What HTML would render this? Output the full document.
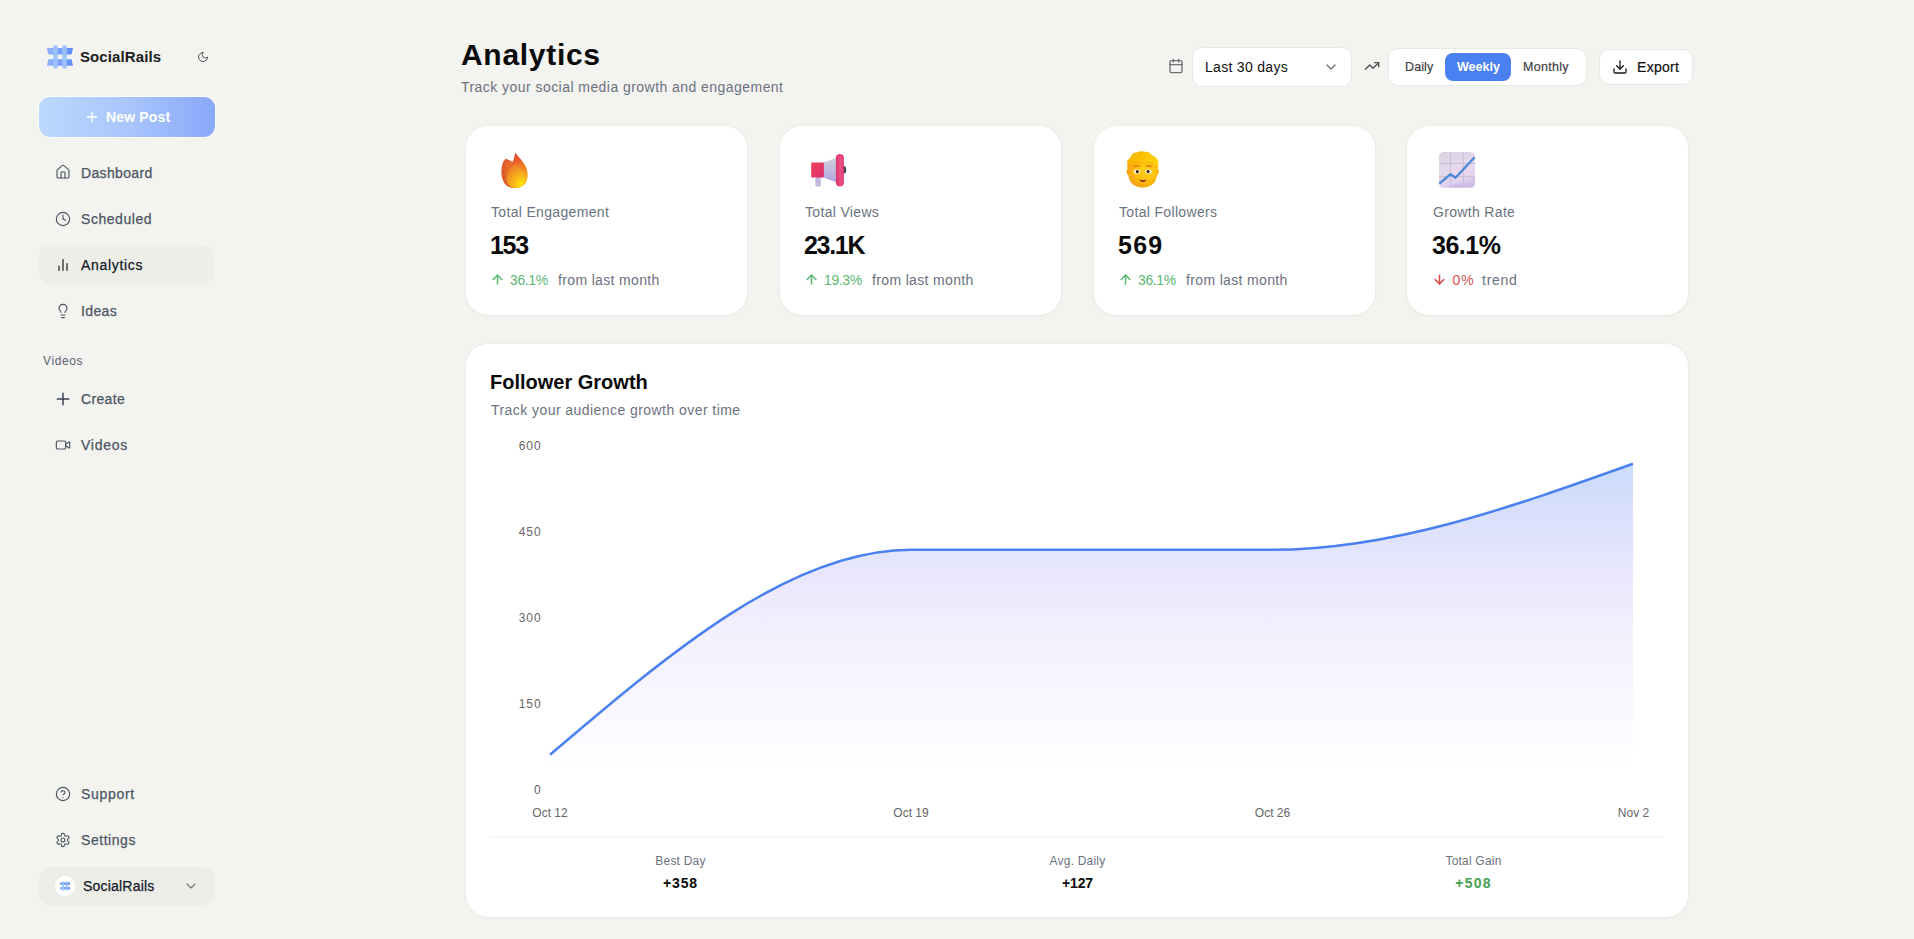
<!DOCTYPE html>
<html>
<head>
<meta charset="utf-8">
<style>
*{box-sizing:border-box;margin:0;padding:0}
html,body{width:1914px;height:939px;overflow:hidden}
body{background:#f3f3ef;font-family:"Liberation Sans",sans-serif;position:relative;color:#111827}
.a{position:absolute}
.t{position:absolute;white-space:nowrap;line-height:1}
.ic{position:absolute;fill:none;stroke-linecap:round;stroke-linejoin:round}
.nav{color:#4b5563;font-size:14px;letter-spacing:0.35px;-webkit-text-stroke:0.25px currentColor}
.card{position:absolute;background:#fff;border-radius:22px;box-shadow:0 0 2px 1px rgba(0,0,0,0.028),0 1px 3px rgba(0,0,0,0.035)}
</style>
</head>
<body>
<!-- SIDEBAR -->
<svg class="a" style="left:45px;top:43px" width="30" height="28" viewBox="0 0 30 28">
  <defs>
    <linearGradient id="lg1" x1="0" y1="0" x2="1" y2="0"><stop offset="0" stop-color="#93b3f8"/><stop offset="1" stop-color="#5b8cf8"/></linearGradient>
  </defs>
  <path d="M1.9 4.9H28L26.6 11.6H3.3Z" fill="url(#lg1)"/>
  <path d="M3.3 16.2H26.6L28 22.7H1.9Z" fill="url(#lg1)"/>
  <rect x="8.2" y="2" width="4.6" height="23.8" rx="2.3" fill="#9cc2fb" opacity="0.95"/>
  <rect x="17.2" y="2" width="4.6" height="23.8" rx="2.3" fill="#9cc2fb" opacity="0.95"/>
</svg>
<div class="t" style="left:80px;top:49px;font-size:15px;font-weight:700;color:#1c1c1c;letter-spacing:0.1px">SocialRails</div>
<svg class="ic" style="left:197px;top:51px" width="12" height="12" viewBox="0 0 24 24" stroke="#52525b" stroke-width="2"><path d="M12 3a6 6 0 0 0 9 9 9 9 0 1 1-9-9Z"/></svg>

<div class="a" style="left:39px;top:97px;width:176px;height:40px;border-radius:11px;background:linear-gradient(90deg,#bcd8fd 0%,#a9c6fc 50%,#88a8fa 100%);box-shadow:0 0 0 1px rgba(255,255,255,0.7)"></div>
<svg class="ic" style="left:84px;top:109px" width="16" height="16" viewBox="0 0 24 24" stroke="#fff" stroke-width="2"><path d="M5 12h14M12 5v14"/></svg>
<div class="t" style="left:106px;top:110px;font-size:14px;font-weight:700;color:#fff;letter-spacing:0.15px">New Post</div>

<!-- nav items -->
<svg class="ic" style="left:55px;top:164px" width="16" height="16" viewBox="0 0 24 24" stroke="#4b5563" stroke-width="1.7"><path d="M15 21v-8a1 1 0 0 0-1-1h-4a1 1 0 0 0-1 1v8"/><path d="M3 10a2 2 0 0 1 .709-1.528l7-5.999a2 2 0 0 1 2.582 0l7 5.999A2 2 0 0 1 21 10v9a2 2 0 0 1-2 2H5a2 2 0 0 1-2-2z"/></svg>
<div class="t nav" style="left:81px;top:166px">Dashboard</div>

<svg class="ic" style="left:55px;top:211px" width="16" height="16" viewBox="0 0 24 24" stroke="#4b5563" stroke-width="1.7"><circle cx="12" cy="12" r="10"/><path d="M12 6v6l4 2"/></svg>
<div class="t nav" style="left:81px;top:212px;letter-spacing:0.55px">Scheduled</div>

<div class="a" style="left:39px;top:245px;width:175px;height:39px;border-radius:11px;background:#eeeee9"></div>
<svg class="ic" style="left:55px;top:257px" width="16" height="16" viewBox="0 0 24 24" stroke="#3f3f46" stroke-width="2.2"><path d="M6 20v-6M12 20V4M18 20V10"/></svg>
<div class="t nav" style="left:81px;top:258px;color:#111827;letter-spacing:0.68px">Analytics</div>

<svg class="ic" style="left:55px;top:303px" width="16" height="16" viewBox="0 0 24 24" stroke="#4b5563" stroke-width="1.7"><path d="M15 14c.2-1 .7-1.7 1.5-2.5 1-.9 1.5-2.2 1.5-3.5A6 6 0 0 0 6 8c0 1 .2 2.2 1.5 3.5.7.7 1.3 1.5 1.5 2.5"/><path d="M9 18h6"/><path d="M10 22h4"/></svg>
<div class="t nav" style="left:81px;top:304px">Ideas</div>

<div class="t" style="left:43px;top:355px;font-size:12px;color:#5b6270;letter-spacing:0.6px">Videos</div>

<svg class="ic" style="left:55px;top:391px" width="16" height="16" viewBox="0 0 24 24" stroke="#374151" stroke-width="2.2"><path d="M3.5 12h17M12 3.5v17"/></svg>
<div class="t nav" style="left:81px;top:392px">Create</div>

<svg class="ic" style="left:55px;top:437px" width="16" height="16" viewBox="0 0 24 24" stroke="#4b5563" stroke-width="1.7"><path d="m16 13 5.223 3.482a.5.5 0 0 0 .777-.416V7.87a.5.5 0 0 0-.752-.432L16 10.5"/><rect x="2" y="6" width="14" height="12" rx="2"/></svg>
<div class="t nav" style="left:81px;top:438px;letter-spacing:0.75px">Videos</div>

<svg class="ic" style="left:55px;top:786px" width="16" height="16" viewBox="0 0 24 24" stroke="#4b5563" stroke-width="1.7"><circle cx="12" cy="12" r="10"/><path d="M9.09 9a3 3 0 0 1 5.83 1c0 2-3 3-3 3"/><path d="M12 17h.01"/></svg>
<div class="t nav" style="left:81px;top:787px;letter-spacing:0.68px">Support</div>

<svg class="ic" style="left:55px;top:832px" width="16" height="16" viewBox="0 0 24 24" stroke="#4b5563" stroke-width="1.7"><path d="M12.22 2h-.44a2 2 0 0 0-2 2v.18a2 2 0 0 1-1 1.73l-.43.25a2 2 0 0 1-2 0l-.15-.08a2 2 0 0 0-2.73.73l-.22.38a2 2 0 0 0 .73 2.73l.15.1a2 2 0 0 1 1 1.72v.51a2 2 0 0 1-1 1.74l-.15.09a2 2 0 0 0-.73 2.73l.22.38a2 2 0 0 0 2.73.73l.15-.08a2 2 0 0 1 2 0l.43.25a2 2 0 0 1 1 1.73V20a2 2 0 0 0 2 2h.44a2 2 0 0 0 2-2v-.18a2 2 0 0 1 1-1.73l.43-.25a2 2 0 0 1 2 0l.15.08a2 2 0 0 0 2.73-.73l.22-.39a2 2 0 0 0-.73-2.73l-.15-.08a2 2 0 0 1-1-1.74v-.5a2 2 0 0 1 1-1.74l.15-.09a2 2 0 0 0 .73-2.73l-.22-.38a2 2 0 0 0-2.73-.73l-.15.08a2 2 0 0 1-2 0l-.43-.25a2 2 0 0 1-1-1.73V4a2 2 0 0 0-2-2z"/><circle cx="12" cy="12" r="3"/></svg>
<div class="t nav" style="left:81px;top:833px;letter-spacing:0.55px">Settings</div>

<div class="a" style="left:39px;top:867px;width:176px;height:38px;border-radius:12px;background:#edede8"></div>
<div class="a" style="left:55px;top:876px;width:20px;height:20px;border-radius:10px;background:#fff"></div>
<svg class="a" style="left:59px;top:880px" width="12" height="12" viewBox="0 0 30 28">
  <path d="M1.9 4.9H28L26.6 11.6H3.3Z" fill="url(#lg1)"/>
  <path d="M3.3 16.2H26.6L28 22.7H1.9Z" fill="url(#lg1)"/>
  <rect x="8.2" y="2" width="4.6" height="23.8" rx="2.3" fill="#9cc2fb"/>
  <rect x="17.2" y="2" width="4.6" height="23.8" rx="2.3" fill="#9cc2fb"/>
</svg>
<div class="t" style="left:83px;top:879px;font-size:14px;color:#111827;letter-spacing:0.2px;-webkit-text-stroke:0.25px currentColor">SocialRails</div>
<svg class="ic" style="left:183px;top:878px" width="16" height="16" viewBox="0 0 24 24" stroke="#71717a" stroke-width="1.7"><path d="m6 9 6 6 6-6"/></svg>

<!-- HEADER -->
<div class="t" style="left:461px;top:40px;font-size:30px;font-weight:700;color:#0a0a0a;letter-spacing:0.7px">Analytics</div>
<div class="t" style="left:461px;top:80px;font-size:14px;color:#6b7280;letter-spacing:0.45px">Track your social media growth and engagement</div>


<!-- header controls -->
<svg class="ic" style="left:1168px;top:58px" width="16" height="16" viewBox="0 0 24 24" stroke="#71717a" stroke-width="2"><path d="M8 2v4M16 2v4"/><rect x="3" y="4" width="18" height="18" rx="2"/><path d="M3 10h18"/></svg>
<div class="a" style="left:1192px;top:47px;width:160px;height:40px;border-radius:10px;background:#fff;border:1px solid #e8e8e6"></div>
<div class="t" style="left:1205px;top:60px;font-size:14px;color:#111;letter-spacing:0.3px">Last 30 days</div>
<svg class="ic" style="left:1323px;top:59px" width="16" height="16" viewBox="0 0 24 24" stroke="#71717a" stroke-width="2"><path d="m6 9 6 6 6-6"/></svg>
<svg class="ic" style="left:1364px;top:58px" width="16" height="16" viewBox="0 0 24 24" stroke="#52525b" stroke-width="2"><path d="M22 7 13.5 15.5 8.5 10.5 2 17"/><path d="M16 7h6v6"/></svg>
<div class="a" style="left:1388px;top:48px;width:199px;height:38px;border-radius:10px;background:#fff;border:1px solid #e8e8e6"></div>
<div class="a" style="left:1445px;top:53px;width:66px;height:28px;border-radius:8px;background:#4a80f0"></div>
<div class="t" style="left:1405px;top:61px;font-size:12.5px;color:#3f3f46;letter-spacing:0.1px;-webkit-text-stroke:0.2px currentColor">Daily</div>
<div class="t" style="left:1457px;top:61px;font-size:12.5px;font-weight:700;color:#fff;letter-spacing:0px">Weekly</div>
<div class="t" style="left:1523px;top:61px;font-size:12.5px;color:#3f3f46;letter-spacing:0.3px;-webkit-text-stroke:0.2px currentColor">Monthly</div>
<div class="a" style="left:1599px;top:49px;width:94px;height:36px;border-radius:10px;background:#fff;border:1px solid #e8e8e6"></div>
<svg class="ic" style="left:1612px;top:59px" width="16" height="16" viewBox="0 0 24 24" stroke="#18181b" stroke-width="2"><path d="M12 15V3"/><path d="M21 15v4a2 2 0 0 1-2 2H5a2 2 0 0 1-2-2v-4"/><path d="m7 10 5 5 5-5"/></svg>
<div class="t" style="left:1637px;top:60px;font-size:14px;color:#111;letter-spacing:0.3px;-webkit-text-stroke:0.2px currentColor">Export</div>

<!-- stat cards -->
<div class="card" style="left:466px;top:126px;width:281px;height:189px"></div>
<div class="card" style="left:780px;top:126px;width:281px;height:189px"></div>
<div class="card" style="left:1094px;top:126px;width:281px;height:189px"></div>
<div class="card" style="left:1407px;top:126px;width:281px;height:189px"></div>

<!-- fire -->
<svg class="a" style="left:495px;top:147px" width="40" height="45" viewBox="0 0 40 45">
 <defs>
  <linearGradient id="fg1" x1="0.3" y1="0" x2="0.6" y2="1"><stop offset="0" stop-color="#de3a36"/><stop offset="0.4" stop-color="#f07426"/><stop offset="1" stop-color="#f9a51c"/></linearGradient>
  <radialGradient id="fg2" cx="0.7" cy="0.85" r="0.8"><stop offset="0" stop-color="#ffe600"/><stop offset="0.3" stop-color="#fcc418"/><stop offset="0.75" stop-color="#f49a22"/><stop offset="1" stop-color="#ef8426"/></radialGradient>
 </defs>
 <path d="M11.2,11.8 C9.2,12.5 7.5,15.5 6.8,19.5 C6,24 6.3,29.5 8,33.5 C9.7,37.5 12.5,40 16,40.8 L21,40.8 L21,16 C17.5,15 14.5,14 13,12.8 C12.5,12.2 11.8,11.7 11.2,11.8 Z" fill="#dd5a2e"/>
 <path d="M14.3,13.2 C12.5,14 10.8,17 10,20.5 C9.2,24.5 9.3,29.5 10.8,33.5 C12.3,37.5 15,40 18.5,40.8 L21,40.8 L21,17 C18.5,15.8 16.2,14.3 15.3,13.5 C15,13.3 14.6,13.1 14.3,13.2 Z" fill="#e86a2b"/>
 <path d="M20.1,5.7 C23.5,9.5 29,15 31.2,20.5 C32.6,24 33,28.5 32,32.5 C30.6,37.5 26.5,40.8 21,40.8 C17,40.8 14,38 13,34 C12,29 13.5,23 16,18.5 C17.8,15 19.5,11 20.1,5.7 Z" fill="url(#fg1)"/>
 <path d="M20.2,16.7 C16.5,19.5 12.8,24 11.8,29 C10.9,33.5 12.3,38 15.8,40.2 C17.3,40.8 19,40.9 21,40.8 C26.5,40.8 30.8,37.5 32,32.5 C32.6,29.5 32.4,26.5 31.8,24 C29,23.5 26.5,21.5 24.5,20 C23,18.8 21.5,17.6 20.2,16.7 Z" fill="url(#fg2)"/>
</svg>
<div class="t" style="left:491px;top:205px;font-size:14px;color:#6b7280;letter-spacing:0.33px">Total Engagement</div>
<div class="t" style="left:490px;top:233px;font-size:25px;font-weight:700;color:#0a0a0a;letter-spacing:-1.3px">153</div>
<svg class="ic" style="left:490px;top:272px" width="15" height="15" viewBox="0 0 24 24" stroke="#5cb874" stroke-width="2.4"><path d="m5 12 7-7 7 7"/><path d="M12 19V5"/></svg>
<div class="t" style="left:510px;top:272.5px;font-size:14px;color:#5cb874;letter-spacing:-0.4px">36.1%</div>
<div class="t" style="left:558px;top:272.5px;font-size:14px;color:#6b7280;letter-spacing:0.35px">from last month</div>

<!-- megaphone -->
<svg class="a" style="left:806px;top:150px" width="44" height="40" viewBox="806 150 44 40">
 <defs>
  <linearGradient id="mg1" x1="0" y1="0" x2="1" y2="1"><stop offset="0" stop-color="#f0415a"/><stop offset="1" stop-color="#d8306f"/></linearGradient>
  <linearGradient id="mg2" x1="0" y1="0" x2="0" y2="1"><stop offset="0" stop-color="#d2d0dc"/><stop offset="1" stop-color="#b0a4e0"/></linearGradient>
  <linearGradient id="mg3" x1="0" y1="0" x2="1" y2="0"><stop offset="0" stop-color="#d9356d"/><stop offset="0.6" stop-color="#f14d85"/><stop offset="1" stop-color="#d83a72"/></linearGradient>
 </defs>
 <rect x="815.4" y="176" width="5.4" height="10.5" fill="#c4b8e0"/>
 <path d="M823.5 162.6 837 157.8 837 182.5 823.5 177.5Z" fill="url(#mg2)"/>
 <rect x="811.2" y="162.6" width="12.7" height="15" rx="0.8" fill="url(#mg1)"/>
 <ellipse cx="843.8" cy="169.8" rx="2.4" ry="3.9" fill="#4a4458"/>
 <rect x="835.9" y="154" width="8" height="32.5" rx="4" fill="url(#mg3)"/>
</svg>
<div class="t" style="left:805px;top:205px;font-size:14px;color:#6b7280;letter-spacing:0.33px">Total Views</div>
<div class="t" style="left:804px;top:233px;font-size:25px;font-weight:700;color:#0a0a0a;letter-spacing:-1.3px">23.1K</div>
<svg class="ic" style="left:804px;top:272px" width="15" height="15" viewBox="0 0 24 24" stroke="#5cb874" stroke-width="2.4"><path d="m5 12 7-7 7 7"/><path d="M12 19V5"/></svg>
<div class="t" style="left:824px;top:272.5px;font-size:14px;color:#5cb874;letter-spacing:-0.4px">19.3%</div>
<div class="t" style="left:872px;top:272.5px;font-size:14px;color:#6b7280;letter-spacing:0.35px">from last month</div>

<!-- face -->
<svg class="a" style="left:1115px;top:145px" width="60" height="50" viewBox="0 0 60 50">
 <defs>
  <radialGradient id="pg1" cx="0.62" cy="0.42" r="0.72"><stop offset="0" stop-color="#ffd21c"/><stop offset="0.5" stop-color="#fdbd0c"/><stop offset="0.85" stop-color="#f5a312"/><stop offset="1" stop-color="#ee8a22"/></radialGradient>
  <linearGradient id="pg2" x1="0" y1="0.2" x2="1" y2="0.6"><stop offset="0" stop-color="#f4b000"/><stop offset="0.6" stop-color="#fcc800"/><stop offset="1" stop-color="#ffd40c"/></linearGradient>
 </defs>
 <path d="M12.3,24.5 C11.2,25.5 11.4,29.5 13.3,30.2 C13.8,33.5 14.8,36 16.2,37.8 C18.8,40.8 23,42.6 27.7,42.6 C32.4,42.6 36.7,40.8 39.2,37.8 C40.6,36 41.6,33.5 42.1,30.2 C44,29.5 44.3,25.5 43.1,24.5 L43,15 L12.6,15 Z" fill="url(#pg1)"/>
 <path d="M12.6,20.5 C12,17 13,13.5 15.8,12 C16.5,9 19,7.3 21.8,7.6 C24,6.2 27.5,5.8 30,6.8 C32.8,6.5 35.8,8 37,10.5 C40.5,11 42.8,14 43.2,17 C43.5,19 43.3,21 42.9,22.5 C42,20.8 40.8,19.2 39,18.3 C37.5,17.2 35.5,16.6 33.5,16.8 C31,16.2 28,15.8 25,16.3 C22,16.5 19.5,17 17.5,18 C15.5,18.8 13.8,19.8 12.6,20.5 Z" fill="url(#pg2)"/>
 <path d="M19.6,21.6 C21,20.6 22.6,20.5 24.2,21.2" stroke="#e07412" stroke-width="1.3" fill="none" stroke-linecap="round"/>
 <path d="M31.6,21.2 C33.2,20.5 34.8,20.6 36.2,21.6" stroke="#e07412" stroke-width="1.3" fill="none" stroke-linecap="round"/>
 <ellipse cx="21.9" cy="26.6" rx="3.1" ry="2.1" fill="#fff"/>
 <ellipse cx="33.5" cy="26.6" rx="3.1" ry="2.1" fill="#fff"/>
 <circle cx="22.3" cy="26.6" r="1.6" fill="#3b2314"/>
 <circle cx="33.1" cy="26.6" r="1.6" fill="#3b2314"/>
 <path d="M24.4,34.4 C26.6,35.4 29.2,35.4 31.4,34.4 C30.8,36.2 29.4,37 27.9,37 C26.4,37 25,36.2 24.4,34.4 Z" fill="#a0282a"/>
</svg>
<div class="t" style="left:1119px;top:205px;font-size:14px;color:#6b7280;letter-spacing:0.33px">Total Followers</div>
<div class="t" style="left:1118px;top:233px;font-size:25px;font-weight:700;color:#0a0a0a;letter-spacing:1.25px">569</div>
<svg class="ic" style="left:1118px;top:272px" width="15" height="15" viewBox="0 0 24 24" stroke="#5cb874" stroke-width="2.4"><path d="m5 12 7-7 7 7"/><path d="M12 19V5"/></svg>
<div class="t" style="left:1138px;top:272.5px;font-size:14px;color:#5cb874;letter-spacing:-0.4px">36.1%</div>
<div class="t" style="left:1186px;top:272.5px;font-size:14px;color:#6b7280;letter-spacing:0.35px">from last month</div>

<!-- chart emoji -->
<svg class="a" style="left:1436px;top:149px" width="42" height="42" viewBox="1436 149 42 42">
 <defs>
  <linearGradient id="cg1" x1="0" y1="0" x2="0.4" y2="1"><stop offset="0" stop-color="#d9d5e3"/><stop offset="0.55" stop-color="#e4d9ec"/><stop offset="0.88" stop-color="#dcd0ee"/><stop offset="1" stop-color="#c6b6e6"/></linearGradient>
  <radialGradient id="cg2" cx="0.75" cy="0.6" r="0.5"><stop offset="0" stop-color="#f0d8ee" stop-opacity="0.7"/><stop offset="1" stop-color="#f0d8ee" stop-opacity="0"/></radialGradient>
 </defs>
 <rect x="1439" y="152" width="36" height="35.7" rx="4.5" fill="url(#cg1)"/>
 <rect x="1439" y="152" width="36" height="35.7" rx="4.5" fill="url(#cg2)"/>
 <path d="M1450.5 152v35.7M1463.3 152v35.7M1439 163.4h36M1439 176.6h36" stroke="#c3b9cf" stroke-width="0.8"/>
 <path d="M1439.3 183.6 1450.3 174.3 1455.5 177.8 1474.6 157.3" stroke="#4a88d8" stroke-width="2.3" fill="none" stroke-linejoin="round"/>
</svg>
<div class="t" style="left:1433px;top:205px;font-size:14px;color:#6b7280;letter-spacing:0.33px">Growth Rate</div>
<div class="t" style="left:1432px;top:233px;font-size:25px;font-weight:700;color:#0a0a0a;letter-spacing:-0.5px">36.1%</div>
<svg class="ic" style="left:1432px;top:272px" width="15" height="15" viewBox="0 0 24 24" stroke="#dc4c4c" stroke-width="2.4"><path d="M12 5v14"/><path d="m19 12-7 7-7-7"/></svg>
<div class="t" style="left:1452.5px;top:272.5px;font-size:14px;color:#d9534f;letter-spacing:0.9px">0%</div>
<div class="t" style="left:1482px;top:272.5px;font-size:14px;color:#6b7280;letter-spacing:0.75px">trend</div>

<!-- chart card -->
<div class="card" style="left:466px;top:344px;width:1222px;height:573px"></div>
<div class="t" style="left:490px;top:372px;font-size:20px;font-weight:700;color:#0a0a0a">Follower Growth</div>
<div class="t" style="left:491px;top:403px;font-size:14px;color:#6b7280;letter-spacing:0.44px">Track your audience growth over time</div>

<svg class="a" style="left:0;top:0" width="1914" height="939" viewBox="0 0 1914 939">
 <defs>
  <linearGradient id="ag" x1="0" y1="0" x2="0" y2="1">
   <stop offset="0.05" stop-color="#4a80f0" stop-opacity="0.27"/>
   <stop offset="0.5" stop-color="#8b5cf6" stop-opacity="0.1"/>
   <stop offset="0.95" stop-color="#8b5cf6" stop-opacity="0"/>
  </linearGradient>
 </defs>
 <path d="M550.0,754.8C670.3,652.3 790.7,549.8 911.0,549.8C1031.3,549.8 1151.7,549.8 1272.0,549.8C1392.3,549.8 1512.7,506.8 1633.0,463.8L1633,789L550,789Z" fill="url(#ag)"/>
 <path d="M550.0,754.8C670.3,652.3 790.7,549.8 911.0,549.8C1031.3,549.8 1151.7,549.8 1272.0,549.8C1392.3,549.8 1512.7,506.8 1633.0,463.8" fill="none" stroke="#4a80f0" stroke-width="2.5"/>
 <g font-family="Liberation Sans" font-size="12" fill="#666" text-anchor="end" letter-spacing="0.9">
  <text x="541.5" y="450">600</text>
  <text x="541.5" y="536">450</text>
  <text x="541.5" y="622">300</text>
  <text x="541.5" y="708">150</text>
  <text x="541.5" y="794">0</text>
 </g>
 <g font-family="Liberation Sans" font-size="12" fill="#666" text-anchor="middle">
  <text x="550" y="816.8">Oct 12</text>
  <text x="911" y="816.8">Oct 19</text>
  <text x="1272.5" y="816.8">Oct 26</text>
  <text x="1633.5" y="816.8">Nov 2</text>
 </g>
 <rect x="490" y="836.5" width="1174" height="1" fill="#efefef"/>
</svg>

<div class="t" style="left:490px;top:855px;width:381px;text-align:center;font-size:12px;color:#6b7280;letter-spacing:0.2px">Best Day</div>
<div class="t" style="left:490px;top:876px;width:381px;text-align:center;font-size:14px;font-weight:700;color:#0a0a0a;letter-spacing:0.9px">+358</div>
<div class="t" style="left:887px;top:855px;width:381px;text-align:center;font-size:12px;color:#6b7280;letter-spacing:0.2px">Avg. Daily</div>
<div class="t" style="left:887px;top:876px;width:381px;text-align:center;font-size:14px;font-weight:700;color:#0a0a0a;letter-spacing:-0.15px">+127</div>
<div class="t" style="left:1283px;top:855px;width:381px;text-align:center;font-size:12px;color:#6b7280;letter-spacing:0.2px">Total Gain</div>
<div class="t" style="left:1283px;top:876px;width:381px;text-align:center;font-size:14px;font-weight:700;color:#46a055;letter-spacing:1.2px">+508</div>

</body>
</html>
